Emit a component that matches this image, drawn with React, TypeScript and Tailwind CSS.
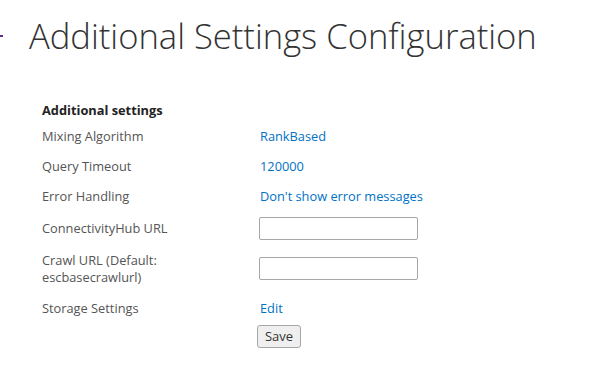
const rows = [
  { label: "Mixing Algorithm", value: "RankBased", h: "h-[30px]" },
  { label: "Query Timeout", value: "120000", h: "h-[30px]" },
  { label: "Error Handling", value: "Don't show error messages", h: "h-[30px]" },
];

const App = () => {
  return (
    <div className="relative w-[590px] h-[380px] bg-white overflow-hidden font-['Open_Sans',sans-serif]">
      <div className="absolute left-0 top-[35px] w-[3px] h-[2px] bg-[#5b2d8e]" />
      <h1 className="pl-[29px] pt-[12px] h-[102px] text-[34.6px] leading-[48px] font-light text-[#333]">
        Additional Settings Configuration
      </h1>

      <div className="pl-[42px] text-[12.8px] leading-[17px]">
        <div className="font-bold text-[#222] h-[19px]">Additional settings</div>

        {rows.map((r) => (
          <div key={r.label} className={`flex items-center ${r.h}`}>
            <div className="w-[218px] text-[#555]">{r.label}</div>
            <a className="text-[#0072c6] cursor-pointer">{r.value}</a>
          </div>
        ))}

        <div className="flex items-center h-[34px]">
          <div className="w-[217px] text-[#555]">ConnectivityHub URL</div>
          <input className="w-[159px] h-[23px] border border-[#a6a6a6] rounded-[2px] px-1 text-[13px]" />
        </div>

        <div className="flex items-center h-[47px]">
          <div className="w-[217px] text-[#555]">
            Crawl URL (Default:
            <br />
            escbasecrawlurl)
          </div>
          <input className="w-[159px] h-[23px] border border-[#a6a6a6] rounded-[2px] px-1 text-[13px]" />
        </div>

        <div className="flex items-center h-[32px]">
          <div className="w-[218px] text-[#555]">Storage Settings</div>
          <a className="text-[#0072c6] cursor-pointer">Edit</a>
        </div>

        <div className="flex pl-[215px] pt-px">
          <button className="w-[44px] h-[23px] bg-[#efefef] border border-[#a6a6a6] rounded-[3px] text-[13px] text-[#333]">
            Save
          </button>
        </div>
      </div>
    </div>
  );
};

export default App;
